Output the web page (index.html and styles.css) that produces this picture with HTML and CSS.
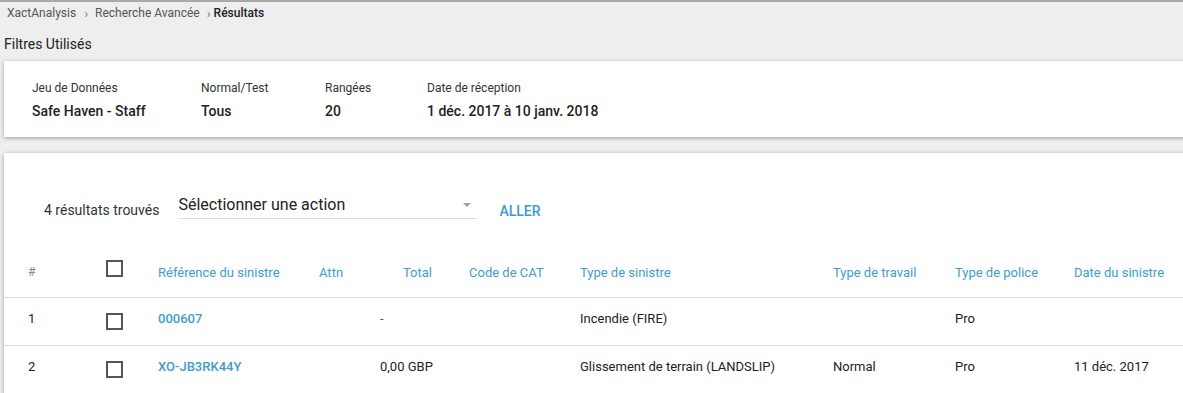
FILE: index.html
```html
<!DOCTYPE html>
<html lang="fr">
<head>
<meta charset="UTF-8" />
<meta name="viewport" content="width=device-width, initial-scale=1.0" />
<title>Résultats</title>
<link rel="stylesheet" href="styles.css">
</head>
<body>
  <!-- Breadcrumb -->
  <nav class="crumbs">
    <a href="#">XactAnalysis</a>
    <span class="sep">›</span>
    <a href="#">Recherche Avancée</a>
    <span class="sep tight">›</span>
    <span class="current">Résultats</span>
  </nav>

  <h2 class="section-title">Filtres Utilisés</h2>

  <!-- Filters summary -->
  <section class="card filters">
    <div class="filter f-data">
      <div class="f-label">Jeu de Données</div>
      <div class="f-value">Safe Haven - Staff</div>
    </div>
    <div class="filter f-mode">
      <div class="f-label">Normal/Test</div>
      <div class="f-value">Tous</div>
    </div>
    <div class="filter f-rows">
      <div class="f-label">Rangées</div>
      <div class="f-value">20</div>
    </div>
    <div class="filter">
      <div class="f-label">Date de réception</div>
      <div class="f-value">1 déc. 2017 à 10 janv. 2018</div>
    </div>
  </section>

  <!-- Results -->
  <section class="card results">
    <div class="actions">
      <span class="count">4 résultats trouvés</span>
      <div class="select">
        <span>Sélectionner une action</span>
        <span class="caret"></span>
      </div>
      <a href="#" class="go">ALLER</a>
    </div>

    <table class="grid">
      <colgroup>
        <col style="width:102px"><col style="width:52px"><col style="width:161px">
        <col style="width:61px"><col style="width:89px"><col style="width:111px">
        <col style="width:253px"><col style="width:122px"><col style="width:119px">
        <col style="width:140px">
      </colgroup>
      <thead>
        <tr>
          <th class="num">#</th>
          <th class="chk"><span class="box"></span></th>
          <th>Référence du sinistre</th>
          <th>Attn</th>
          <th class="amt">Total</th>
          <th>Code de CAT</th>
          <th>Type de sinistre</th>
          <th>Type de travail</th>
          <th>Type de police</th>
          <th>Date du sinistre</th>
        </tr>
      </thead>
      <tbody>
        <tr>
          <td class="num">1</td>
          <td class="chk"><span class="box"></span></td>
          <td><a href="#" class="ref">000607</a></td>
          <td></td>
          <td class="amt dash">-</td>
          <td></td>
          <td>Incendie (FIRE)</td>
          <td></td>
          <td>Pro</td>
          <td></td>
        </tr>
        <tr>
          <td class="num">2</td>
          <td class="chk"><span class="box"></span></td>
          <td><a href="#" class="ref">XO-JB3RK44Y</a></td>
          <td></td>
          <td class="amt">0,00 GBP</td>
          <td></td>
          <td>Glissement de terrain (LANDSLIP)</td>
          <td>Normal</td>
          <td>Pro</td>
          <td>11 déc. 2017</td>
        </tr>
      </tbody>
    </table>
  </section>
</body>
</html>
```

FILE: styles.css
```css
/* -------------------------------------------------------------
   Reset & globals
------------------------------------------------------------- */
*{box-sizing:border-box;margin:0;padding:0}
html,body{height:100%}
body{
  background:#eeeeee;
  border-top:2px solid #a9a9a9;
  overflow:hidden;
  font-family:Roboto,"Liberation Sans",Arial,sans-serif;
  color:#222;
}
a{text-decoration:none;color:inherit}

/* -------------------------------------------------------------
   Breadcrumb + title
------------------------------------------------------------- */
.crumbs{
  display:flex;align-items:center;
  height:22px;padding-left:7px;
  font-size:12px;color:#555;
}
.crumbs .sep{margin:0 7px 0 8px;color:#777;font-size:13px}
.crumbs .sep.tight{margin:0 3px 0 7px}
.crumbs .current{color:#222;font-weight:500}

.section-title{
  font-size:14px;font-weight:400;color:#222;
  padding:12px 0 0 4px;height:37px;
}

/* -------------------------------------------------------------
   Cards
------------------------------------------------------------- */
.card{
  background:#fff;
  margin-left:4px;margin-right:-20px;
  box-shadow:0 1px 4px rgba(0,0,0,.35);
}

.filters{
  display:flex;
  height:76px;
  padding:19px 0 0 28px;
}
.filter{white-space:nowrap}
.f-data{width:169px}
.f-mode{width:124px}
.f-rows{width:102px}
.f-label{font-size:12px;color:#333;line-height:16px}
.f-value{font-size:14px;font-weight:500;color:#222;line-height:18px;margin-top:6px}

.results{margin-top:16px;height:260px}

/* -------------------------------------------------------------
   Action bar
------------------------------------------------------------- */
.actions{
  display:flex;align-items:flex-start;
  padding:42px 0 0 40px;
  height:95px;
}
.count{font-size:14px;color:#333;line-height:16px;margin-top:7px}
.select{
  position:relative;
  width:299px;margin-left:19px;
  border-bottom:1px solid #ddd;
  font-size:16px;color:#222;
  line-height:20px;padding-bottom:3px;
}
.caret{
  position:absolute;right:6px;top:8px;
  border-left:4px solid transparent;border-right:4px solid transparent;
  border-top:4px solid #a0a0a0;
}
.go{
  margin-left:22px;margin-top:8px;
  font-size:14px;font-weight:500;color:#3b9bd0;
  line-height:16px;
}

/* -------------------------------------------------------------
   Results table
------------------------------------------------------------- */
.grid{
  table-layout:fixed;border-collapse:collapse;
  width:1210px;
  font-size:13px;
}
.grid th{
  font-weight:400;color:#3d9dcc;text-align:left;
  height:49px;vertical-align:middle;white-space:nowrap;
  border-bottom:1px solid #dcdcdc;
}
.grid td{
  height:48px;vertical-align:middle;color:#222;white-space:nowrap;
  padding-bottom:5px;
  border-bottom:1px solid #dcdcdc;
}
.grid .num{padding-left:24px}
.grid th.num{color:#888;font-size:12px}
.grid th.amt{text-align:right;padding-right:37px}
.grid td.dash{color:#555}
.ref{color:#3d9dcc;font-weight:500}

.box{
  display:block;width:17px;height:17px;
  border:2px solid #555;background:#fff;
}
th.chk .box{transform:translateY(-4px)}
td.chk .box{transform:translateY(3px)}
```
